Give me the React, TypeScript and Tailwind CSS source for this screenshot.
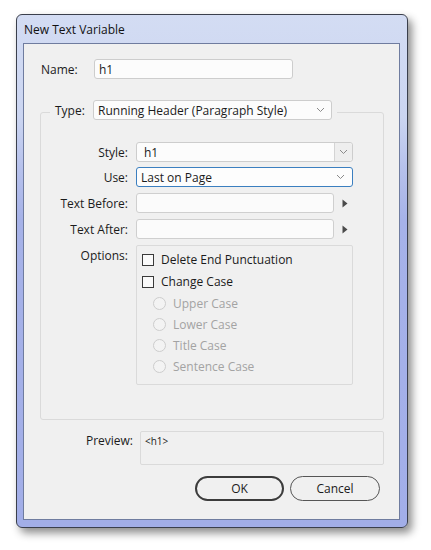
import React from "react";

function Chevron() {
  return (
    <svg width="9" height="6" viewBox="0 0 9 6" className="shrink-0">
      <path d="M1 1 L4.5 4.5 L8 1" fill="none" stroke="#8a8a8a" strokeWidth="1" />
    </svg>
  );
}

function Arrow() {
  return (
    <svg width="6" height="9" viewBox="0 0 6 9" className="shrink-0">
      <path d="M0.5 0.5 L5.5 4.5 L0.5 8.5 Z" fill="#4a4a4a" />
    </svg>
  );
}

function Row({ label, children }: { label: string; children: React.ReactNode }) {
  return (
    <div className="flex items-center h-[20px]">
      <span className="w-[88px] text-right pr-[1px] pt-[1px]">{label}</span>
      <div className="ml-[7px] flex items-center">{children}</div>
    </div>
  );
}

function TextField() {
  return (
    <div className="flex items-center">
      <div className="w-[198px] h-[20px] border border-[#cfcfcf] rounded-[3px] bg-[#fbfbfb]" />
      <div className="ml-[8px]">
        <Arrow />
      </div>
    </div>
  );
}

function Radio({ label }: { label: string }) {
  return (
    <div className="flex items-center h-[21px] pl-[16px]">
      <div className="w-[13px] h-[13px] rounded-full border border-[#cdcdcd] bg-[#f3f3f3]" />
      <span className="ml-[7px] text-[#a3a3a3]">{label}</span>
    </div>
  );
}

function Check({ label }: { label: string }) {
  return (
    <div className="flex items-center h-[22px] pl-[5px]">
      <div className="w-[12px] h-[12px] border border-[#3a3a3a] bg-[#fafafa]" />
      <span className="ml-[7px]">{label}</span>
    </div>
  );
}

export default function App() {
  return (
    <div className="w-[431px] h-[550px] bg-white pt-[14px] pl-[16px] font-['Open_Sans',sans-serif] text-[12px] leading-[16px] text-[#1b1b1b]">
      <div className="w-[392px] h-[514px] rounded-[6px] border border-[#3a3f4c] bg-[linear-gradient(180deg,#d3dcf3_0%,#cbd5f1_20%,#b6c1ec_30%,#a6b2e8_40%,#a2aee8_100%)] shadow-[4px_5px_9px_rgba(0,0,0,0.45)] flex flex-col pl-[6px] pr-[7px] pb-[7px]">
        <div className="h-[28px] flex items-center pl-[1px] pt-[1px] text-[#111]">New Text Variable</div>
        <div className="flex-1 bg-[#f0f0f0] border border-[#6f7c9f] flex flex-col pt-[15px]">
          {/* Name */}
          <div className="flex items-center h-[20px]">
            <span className="ml-[17px] w-[53px] pt-[1px]">Name:</span>
            <div className="w-[199px] h-[20px] border border-[#cdcdcd] rounded-[3px] bg-[#fcfcfc] flex items-center pl-[4px] pt-[1px]">h1</div>
          </div>

          {/* Type + group */}
          <div className="mt-[21px] flex flex-col">
            <div className="relative z-10 ml-[26px] w-[287px] h-[20px] flex items-center bg-[#f0f0f0]">
              <span className="ml-[5px] w-[38px] pt-[1px]">Type:</span>
              <div className="w-[239px] h-[20px] border border-[#cdcdcd] rounded-[3px] bg-[#fcfcfc] flex items-center pl-[4px] pr-[6px]">
                <span className="flex-1 pt-[1px]">Running Header (Paragraph Style)</span>
                <Chevron />
              </div>
            </div>
            <div className="-mt-[8px] ml-[16px] w-[344px] h-[308px] border border-[#dadada] rounded-[3px] flex flex-col pt-[29px]">
              <Row label="Style:">
                <div className="w-[217px] h-[20px] border border-[#cdcdcd] rounded-[3px] bg-[#fcfcfc] flex items-center">
                  <span className="flex-1 pl-[7px] pt-[1px]">h1</span>
                  <div className="w-[18px] h-full border-l border-[#d4d4d4] bg-[#eeeeee] flex items-center justify-center rounded-r-[3px]">
                    <Chevron />
                  </div>
                </div>
              </Row>
              <div className="mt-[5px]">
                <Row label="Use:">
                  <div className="w-[217px] h-[20px] border border-[#3b7fc0] rounded-[3px] bg-[#fdfdfd] flex items-center pl-[4px] pr-[7px]">
                    <span className="flex-1 pt-[1px]">Last on Page</span>
                    <Chevron />
                  </div>
                </Row>
              </div>
              <div className="mt-[6px]">
                <Row label="Text Before:">
                  <TextField />
                </Row>
              </div>
              <div className="mt-[6px]">
                <Row label="Text After:">
                  <TextField />
                </Row>
              </div>
              <div className="mt-[6px] flex">
                <span className="w-[88px] text-right pr-[1px] pt-[3px]">Options:</span>
                <div className="ml-[7px] w-[217px] h-[140px] border border-[#dadada] rounded-[2px] pt-[3px] flex flex-col">
                  <Check label="Delete End Punctuation" />
                  <Check label="Change Case" />
                  <Radio label="Upper Case" />
                  <Radio label="Lower Case" />
                  <Radio label="Title Case" />
                  <Radio label="Sentence Case" />
                </div>
              </div>
            </div>
          </div>

          {/* Preview */}
          <div className="mt-[11px] flex">
            <span className="w-[109px] text-right pt-[2px]">Preview:</span>
            <div className="ml-[7px] w-[244px] h-[34px] border border-[#dadada] rounded-[2px] pl-[4px] pt-[2px] text-[10px] leading-[14px]">
              &lt;h1&gt;
            </div>
          </div>

          {/* Buttons */}
          <div className="mt-[11px] flex pl-[171px]">
            <div className="w-[89px] h-[25px] rounded-full border-2 border-[#3c3c3c] flex items-center justify-center">OK</div>
            <div className="ml-[6px] w-[90px] h-[25px] rounded-full border border-[#555] flex items-center justify-center">Cancel</div>
          </div>
        </div>
      </div>
    </div>
  );
}
